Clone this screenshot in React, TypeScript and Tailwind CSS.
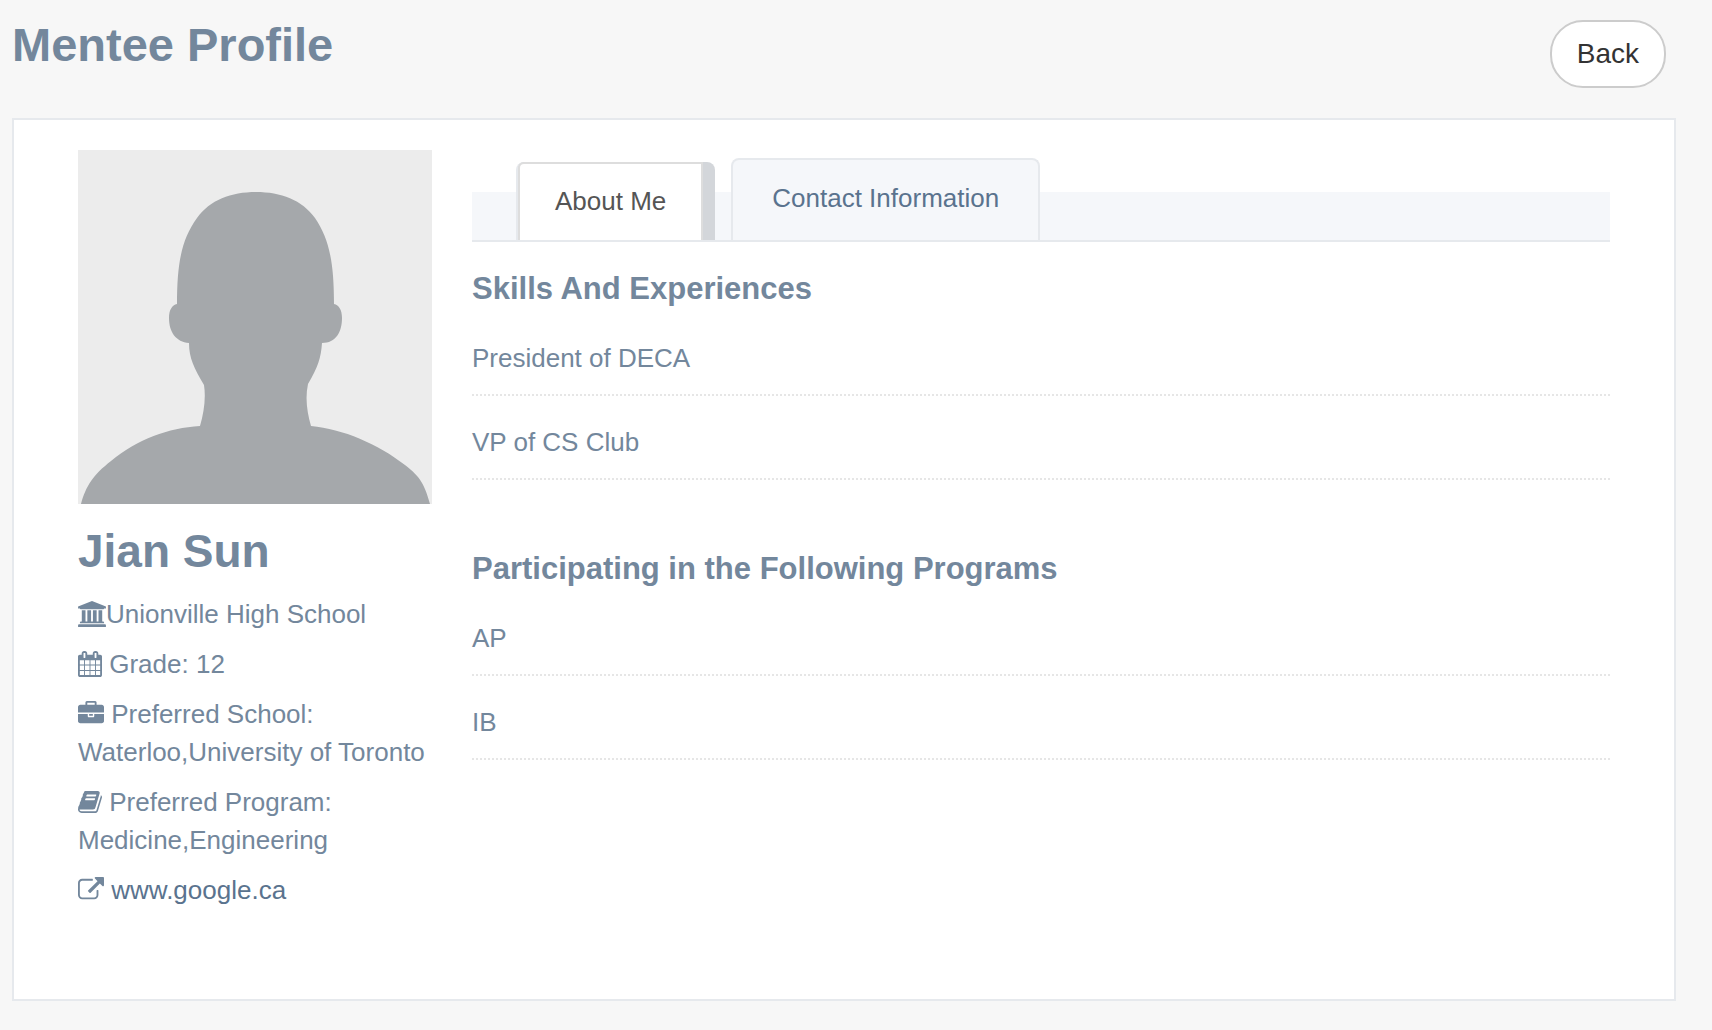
import { useState, type ReactNode } from "react";

type IconName = "university" | "calendar" | "briefcase" | "book" | "externalLink";

const icons: Record<IconName, { viewBox: string; className: string; path: string }> = {
  university: {
    viewBox: "0 0 1920 1792",
    className: "w-[28px]",
    path: "M960 0l960 384v128h-128q0 26-20.5 45t-48.5 19h-1526q-28 0-48.5-19t-20.5-45h-128v-128zM256 640h256v768h128v-768h256v768h128v-768h256v768h128v-768h256v768h59q28 0 48.5 19t20.5 45v64h-1664v-64q0-26 20.5-45t48.5-19h59v-768zM1851 1600q28 0 48.5 19t20.5 45v128h-1920v-128q0-26 20.5-45t48.5-19h1782z",
  },
  calendar: {
    viewBox: "0 0 1664 1792",
    className: "w-[24px]",
    path: "M128 1664h288v-288h-288v288zm352 0h320v-288h-320v288zm-352-352h288v-320h-288v320zm352 0h320v-320h-320v320zm-352-384h288v-288h-288v288zm736 736h320v-288h-320v288zm-384-736h320v-288h-320v288zm768 736h288v-288h-288v288zm-384-352h320v-320h-320v320zm-352-864v-288q0-13-9.5-22.5t-22.5-9.5h-64q-13 0-22.5 9.5t-9.5 22.5v288q0 13 9.5 22.5t22.5 9.5h64q13 0 22.5-9.5t9.5-22.5zm736 864h288v-320h-288v320zm-384-384h320v-288h-320v288zm384 0h288v-288h-288v288zm32-480v-288q0-13-9.5-22.5t-22.5-9.5h-64q-13 0-22.5 9.5t-9.5 22.5v288q0 13 9.5 22.5t22.5 9.5h64q13 0 22.5-9.5t9.5-22.5zm384-64v1280q0 52-38 90t-90 38h-1408q-52 0-90-38t-38-90v-1280q0-52 38-90t90-38h128v-96q0-66 47-113t113-47h64q66 0 113 47t47 113v96h384v-96q0-66 47-113t113-47h64q66 0 113 47t47 113v96h128q52 0 90 38t38 90z",
  },
  briefcase: {
    viewBox: "0 0 1792 1792",
    className: "w-[26px]",
    path: "M640 256h512v-128h-512v128zm1152 640v480q0 66-47 113t-113 47h-1472q-66 0-113-47t-47-113v-480h672v160q0 26 19 45t45 19h320q26 0 45-19t19-45v-160h672zm-768 0v128h-256v-128h256zm768-480v384h-1792v-384q0-66 47-113t113-47h352v-160q0-40 28-68t68-28h576q40 0 68 28t28 68v160h352q66 0 113 47t47 113z",
  },
  book: {
    viewBox: "64 0 1664 1792",
    className: "w-[24px]",
    path: "M1703 478q40 57 18 129l-275 906q-19 64-76.5 107.5t-122.5 43.5h-923q-77 0-148.5-53.5t-99.5-131.5q-24-67-2-127 0-4 3-27t4-37q1-8-3-21.5t-3-19.5q2-11 8-21t16.5-23.5 16.5-23.5q23-38 45-91.5t30-91.5q3-10 .5-30t-.5-28q3-11 17-28t17-23q21-36 42-92t25-90q1-9-2.5-32t.5-28q4-13 22-30.5t22-22.5q19-26 42.5-84.5t27.5-96.5q1-8-3-25.5t-2-26.5q2-8 9-18t18-23 17-21q8-12 16.5-30.5t15-35 16-36 19.5-32 26.5-23.5 36-11.5 47.5 5.5l-1 3q38-9 51-9h761q74 0 114 56t18 130l-274 906q-36 119-71.5 153.5t-128.5 34.5h-869q-27 0-38 15-11 16-1 43 24 70 144 70h923q29 0 56-15.5t35-41.5l300-987q7-22 5-57 38 15 59 43zm-1064 2q-4 13 2 22.5t20 9.5h608q13 0 25.5-9.5t16.5-22.5l21-64q4-13-2-22.5t-20-9.5h-608q-13 0-25.5 9.5t-16.5 22.5zm-83 256q-4 13 2 22.5t20 9.5h608q13 0 25.5-9.5t16.5-22.5l21-64q4-13-2-22.5t-20-9.5h-608q-13 0-25.5 9.5t-16.5 22.5z",
  },
  externalLink: {
    viewBox: "0 0 1792 1792",
    className: "w-[26px]",
    path: "M1408 928v320q0 119-84.5 203.5t-203.5 84.5h-832q-119 0-203.5-84.5t-84.5-203.5v-832q0-119 84.5-203.5t203.5-84.5h704q14 0 23 9t9 23v64q0 14-9 23t-23 9h-704q-66 0-113 47t-47 113v832q0 66 47 113t113 47h832q66 0 113-47t47-113v-320q0-14 9-23t23-9h64q14 0 23 9t9 23zm384-864v512q0 26-19 45t-45 19-45-19l-176-176-652 652q-10 10-23 10t-23-10l-114-114q-10-10-10-23t10-23l652-652-176-176q-19-19-19-45t19-45 45-19h512q26 0 45 19t19 45z",
  },
};

function Icon({ name }: { name: IconName }) {
  const icon = icons[name];
  return (
    <svg
      viewBox={icon.viewBox}
      className={`inline-block h-[26px] align-[-4px] ${icon.className}`}
      fill="currentColor"
      aria-hidden="true"
    >
      <path d={icon.path} />
    </svg>
  );
}

function Avatar() {
  return (
    <svg viewBox="0 0 354 354" className="block w-full" role="img" aria-label="Jian Sun">
      <rect width="354" height="354" fill="#ececec" />
      <path
        fill="#a5a8ab"
        d="M178 42C203 42 224 50 237 68C252 90 256 115 256 154C261 155 264 160 264 168C264 182 258 193 244 193C243 208 240 217 230 234C227 248 229 262 233 276C265 279 300 294 327 315C343 327 347 336 352 354L3 354C8 336 15 325 33 311C60 289 90 278 122 276C126 262 128 248 126 235C116 218 111 208 111 193C98 192 91 182 91 168C91 160 94 155 99 154C99 115 103 90 119 68C132 50 153 42 178 42Z"
      />
    </svg>
  );
}

function Section({ title, items }: { title: string; items: string[] }) {
  return (
    <section>
      <h3 className="mb-[5px] text-[31px] leading-9 font-bold">{title}</h3>
      <ul>
        {items.map((item) => (
          <li key={item} className="border-b-2 border-dotted border-[#e6e6e6] pt-[27px] pb-[17px]">
            {item}
          </li>
        ))}
      </ul>
    </section>
  );
}

function Detail({ children }: { children: ReactNode }) {
  return <li>{children}</li>;
}

export default function App() {
  const [tab, setTab] = useState<"about" | "contact">("about");

  return (
    <div className="min-h-screen bg-[#f7f7f7] pt-5 pr-9 pl-3 font-['Liberation_Sans',Arial,sans-serif] text-[26px] leading-[38px] text-[#73879c]">
      <header className="mb-[30px] flex items-start justify-between pr-2.5">
        <h1 className="text-[47px] leading-[50px] font-bold">Mentee Profile</h1>
        <button
          type="button"
          className="rounded-[33px] border-2 border-[#cccccc] bg-white px-[25px] py-3 text-[28px] leading-10 text-[#333333]"
        >
          Back
        </button>
      </header>

      <main className="flex gap-10 border-2 border-[#e6e9ed] bg-white px-16 pb-[90px]">
        <aside className="w-[354px] shrink-0 pt-[30px]">
          <Avatar />
          <h2 className="mt-[21px] mb-[18px] text-[46px] leading-[52px] font-bold">Jian Sun</h2>
          <ul className="flex flex-col gap-3">
            <Detail>
              <Icon name="university" />
              Unionville High School
            </Detail>
            <Detail>
              <Icon name="calendar" /> Grade: 12
            </Detail>
            <Detail>
              <Icon name="briefcase" /> Preferred School: Waterloo,University of Toronto
            </Detail>
            <Detail>
              <Icon name="book" /> Preferred Program: Medicine,Engineering
            </Detail>
            <Detail>
              <Icon name="externalLink" />{" "}
              <a href="http://www.google.ca" className="text-[#5a738e]">
                www.google.ca
              </a>
            </Detail>
          </ul>
        </aside>

        <div className="min-w-0 flex-1 pt-[38px]">
          <div
            role="tablist"
            className="mb-[29px] flex items-end gap-4 border-b-2 border-[#e6e9ed] bg-[linear-gradient(#f5f7fa,#f5f7fa)] bg-[length:100%_48px] bg-bottom bg-no-repeat pl-[44px]"
          >
            <button
              type="button"
              role="tab"
              id="tab-about"
              aria-selected={tab === "about"}
              onClick={() => setTab("about")}
              className="rounded-t-lg border-l-2 border-[#e6e9ed] bg-[#d3d6da] pr-3 text-[#555555]"
            >
              <span className="block rounded-tl-md border-2 border-b-0 border-[#dddddd] bg-white px-[35px] pt-[18px] pb-5">
                About Me
              </span>
            </button>
            <button
              type="button"
              role="tab"
              id="tab-contact"
              aria-selected={tab === "contact"}
              onClick={() => setTab("contact")}
              className="rounded-t-lg border-2 border-b-0 border-[#e6e9ed] bg-[#f5f7fa] px-[39px] pt-[19px] pb-[23px] text-[#5a738e]"
            >
              Contact Information
            </button>
          </div>

          <div role="tabpanel" aria-labelledby="tab-about" className="flex flex-col gap-[71px]">
            <Section title="Skills And Experiences" items={["President of DECA", "VP of CS Club"]} />
            <Section title="Participating in the Following Programs" items={["AP", "IB"]} />
          </div>
        </div>
      </main>
    </div>
  );
}
